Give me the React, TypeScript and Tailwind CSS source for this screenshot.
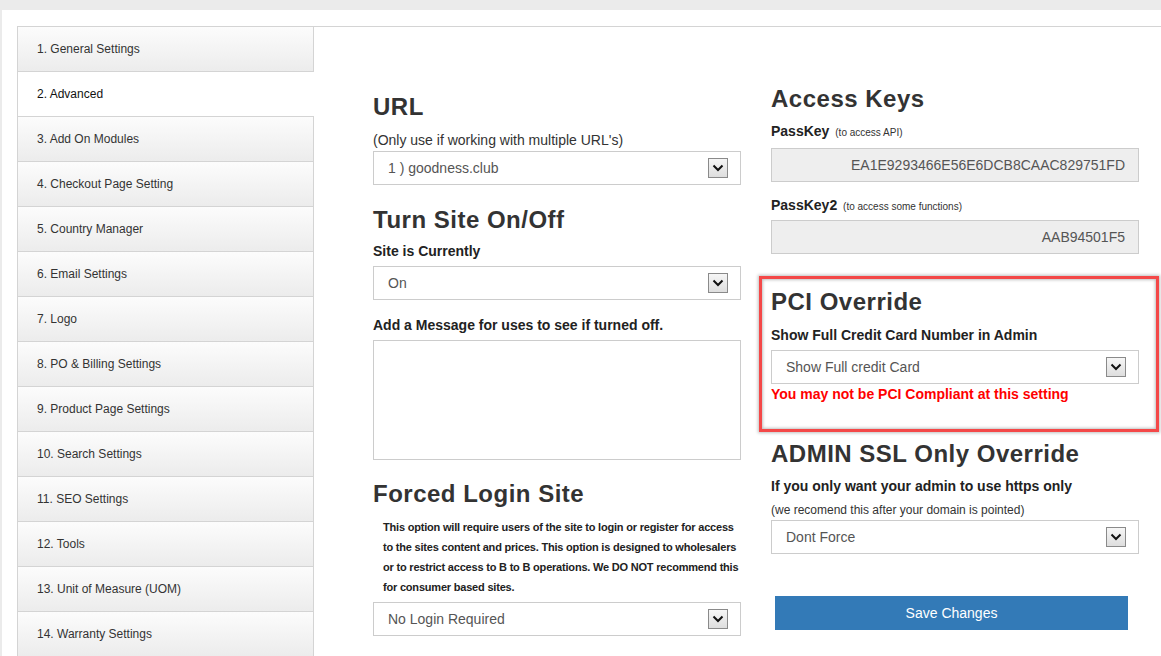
import React from "react";

const items = [
  "1. General Settings",
  "2. Advanced",
  "3. Add On Modules",
  "4. Checkout Page Setting",
  "5. Country Manager",
  "6. Email Settings",
  "7. Logo",
  "8. PO & Billing Settings",
  "9. Product Page Settings",
  "10. Search Settings",
  "11. SEO Settings",
  "12. Tools",
  "13. Unit of Measure (UOM)",
  "14. Warranty Settings",
];

function Chevron() {
  return (
    <span className="flex h-[20px] w-[20px] items-center justify-center border border-[#8a8a8a] bg-gradient-to-b from-[#f6f6f6] to-[#dedede]">
      <svg width="12" height="8" viewBox="0 0 12 8">
        <path d="M1.5 1.5 L6 6 L10.5 1.5" fill="none" stroke="#111" strokeWidth="2" />
      </svg>
    </span>
  );
}

function Select({ value }: { value: string }) {
  return (
    <div className="flex h-[34px] w-full items-center justify-between border border-[#cccccc] bg-white pl-[14px] pr-[12px] text-[14px] text-[#555]">
      <span>{value}</span>
      <Chevron />
    </div>
  );
}

function Heading({ children }: { children: React.ReactNode }) {
  return <h2 className="text-[24px] font-bold leading-[26px] tracking-[0.5px] text-[#333]">{children}</h2>;
}

export default function App() {
  return (
    <div
      className="min-h-[656px] w-full bg-[#ebebeb] pt-[10px] pl-[2px]"
      style={{ fontFamily: '"Liberation Sans", Arial, sans-serif' }}
    >
      <div className="flex min-h-[646px] bg-white pt-[16px] pl-[15px]">
        {/* Sidebar */}
        <div className="w-[297px] shrink-0 border-t border-[#d4d4d4]">
          {items.map((t, i) =>
            i === 1 ? (
              <div
                key={t}
                className="flex h-[45px] items-center border-b border-l border-[#d4d4d4] bg-white pl-[19px] text-[12px] text-[#111]"
              >
                {t}
              </div>
            ) : (
              <div
                key={t}
                className="flex h-[45px] items-center border-b border-l border-r border-[#d4d4d4] bg-gradient-to-b from-[#fcfcfc] to-[#ececec] pl-[19px] text-[12px] text-[#333]"
              >
                {t}
              </div>
            )
          )}
        </div>

        {/* Content */}
        <div className="flex flex-1 gap-[30px] border-t border-[#d4d4d4] pl-[59px]">
          {/* Middle column */}
          <div className="w-[368px] shrink-0 pt-[67px]">
            <Heading>URL</Heading>
            <p className="mt-[10px] text-[14px] leading-[20px] text-[#333]">(Only use if working with multiple URL's)</p>
            <div className="mt-px">
              <Select value="1 ) goodness.club" />
            </div>

            <div className="mt-[22px]">
              <Heading>Turn Site On/Off</Heading>
            </div>
            <p className="mt-[8px] text-[14px] font-bold leading-[20px] text-[#222]">Site is Currently</p>
            <div className="mt-[5px]">
              <Select value="On" />
            </div>
            <p className="mt-[15px] text-[14px] font-bold leading-[20px] text-[#222]">
              Add a Message for uses to see if turned off.
            </p>
            <div className="mt-[5px] h-[120px] w-full border border-[#cccccc] bg-white" />

            <div className="mt-[21px]">
              <Heading>Forced Login Site</Heading>
            </div>
            <p className="mt-[10px] whitespace-nowrap pl-[10px] text-[11px] font-bold leading-[20px] tracking-[-0.2px] text-[#222]">
              This option will require users of the site to login or register for access
              <br />
              to the sites content and prices. This option is designed to wholesalers
              <br />
              or to restrict access to B to B operations. We DO NOT recommend this
              <br />
              for consumer based sites.
            </p>
            <div className="mt-[5px]">
              <Select value="No Login Required" />
            </div>
          </div>

          {/* Right column */}
          <div className="w-[368px] shrink-0 pt-[59px]">
            <Heading>Access Keys</Heading>
            <p className="mt-[9px] text-[14px] font-bold leading-[20px] text-[#222]">
              PassKey <span className="ml-[2px] text-[10px] font-normal text-[#333]">(to access API)</span>
            </p>
            <div className="mt-[5px] flex h-[34px] items-center justify-end border border-[#cccccc] bg-[#eeeeee] pr-[13px] text-[14px] text-[#555]">
              EA1E9293466E56E6DCB8CAAC829751FD
            </div>
            <p className="mt-[13px] text-[14px] font-bold leading-[20px] text-[#222]">
              PassKey2 <span className="ml-[2px] text-[10px] font-normal text-[#333]">(to access some functions)</span>
            </p>
            <div className="mt-[3px] flex h-[34px] items-center justify-end border border-[#cccccc] bg-[#eeeeee] pr-[13px] text-[14px] text-[#555]">
              AAB94501F5
            </div>

            {/* Highlighted PCI box */}
            <div className="mt-[22px] ml-[-12px] mr-[-20px] h-[156px] border-[3px] border-[#f44848] pt-[10px] pl-[9px] pr-[17px] shadow-[0_0_3px_1px_rgba(0,0,0,0.25),inset_0_0_3px_1px_rgba(0,0,0,0.25)]">
              <Heading>PCI Override</Heading>
              <p className="mt-[10px] text-[14px] font-bold leading-[20px] text-[#222]">
                Show Full Credit Card Number in Admin
              </p>
              <div className="mt-[5px]">
                <Select value="Show Full credit Card" />
              </div>
              <p className="text-[14px] font-bold leading-[20px] text-[#ff0000]">
                You may not be PCI Compliant at this setting
              </p>
            </div>

            <div className="mt-[9px]">
              <Heading>ADMIN SSL Only Override</Heading>
            </div>
            <p className="mt-[9px] text-[14px] font-bold leading-[20px] text-[#222]">
              If you only want your admin to use https only
            </p>
            <p className="mt-[5px] text-[12px] leading-[19px] text-[#333]">
              (we recomend this after your domain is pointed)
            </p>
            <Select value="Dont Force" />

            <button className="mt-[42px] ml-[4px] flex h-[34px] w-[353px] items-center justify-center bg-[#337ab7] text-[14px] text-white">
              Save Changes
            </button>
          </div>
        </div>
      </div>
    </div>
  );
}
